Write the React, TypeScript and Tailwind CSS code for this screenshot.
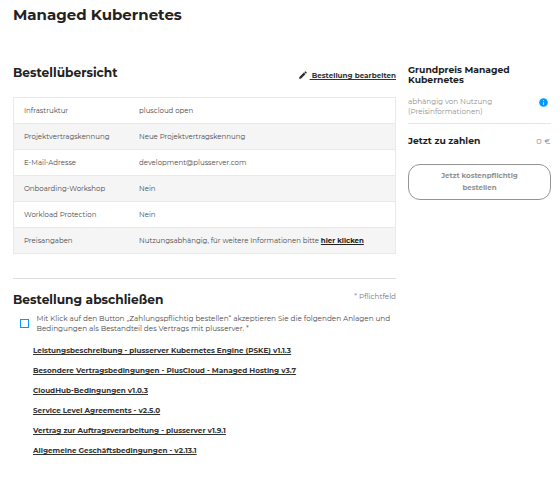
const rows = [
  { label: "Infrastruktur", value: "pluscloud open" },
  { label: "Projektvertragskennung", value: "Neue Projektvertragskennung" },
  { label: "E-Mail-Adresse", value: "development@plusserver.com" },
  { label: "Onboarding-Workshop", value: "Nein" },
  { label: "Workload Protection", value: "Nein" },
  { label: "Preisangaben", value: "Nutzungsabhängig, für weitere Informationen bitte", link: "hier klicken" },
];

const documents = [
  "Leistungsbeschreibung - plusserver Kubernetes Engine (PSKE) v1.1.3",
  "Besondere Vertragsbedingungen - PlusCloud - Managed Hosting v3.7",
  "CloudHub-Bedingungen v1.0.3",
  "Service Level Agreements - v2.5.0",
  "Vertrag zur Auftragsverarbeitung - plusserver v1.9.1",
  "Allgemeine Geschäftsbedingungen - v2.13.1",
];

const linkClass =
  "font-bold underline decoration-1 underline-offset-1 [text-decoration-skip-ink:none]";

function PencilIcon() {
  return (
    <svg viewBox="0 0 24 24" className="mr-[2px] mb-[2px] h-[10px] w-[10px] fill-[#2b2b2b]">
      <path d="M3 17.25V21h3.75L17.8 9.95l-3.75-3.75L3 17.25zM20.7 7.05a1 1 0 0 0 0-1.42l-2.33-2.33a1 1 0 0 0-1.42 0l-1.83 1.83 3.75 3.75 1.83-1.83z" />
    </svg>
  );
}

function InfoIcon() {
  return (
    <svg viewBox="0 0 24 24" className="mt-[0.5px] mr-[3px] h-[9px] w-[9px]">
      <circle cx="12" cy="12" r="11.5" fill="#0099ff" />
      <path d="M10.8 5.5h2.6v2.8h-2.6zM10.8 10.5h2.6v8h-2.6z" fill="#b8e0ff" />
    </svg>
  );
}

export default function App() {
  return (
    <main className="h-[478px] w-[560px] overflow-hidden bg-white pt-[5px] pl-[13px] font-['Montserrat','Inter',sans-serif] text-[7.24px] leading-[10px] text-[#4a4a4a]">
      <h1 className="h-[58px] text-[15px] leading-5 font-bold text-[#222]">Managed Kubernetes</h1>
      <div className="flex gap-3">
        <div className="w-[383px]">
          <div className="flex h-[34px] justify-between">
            <h2 className="text-[12.21px] leading-5 font-bold text-[#222]">Bestellübersicht</h2>
            <a className="mt-[8px] flex h-[10px] items-center self-start">
              <PencilIcon />
              <span className={`whitespace-pre text-[#333] ${linkClass}`}>{" Bestellung bearbeiten"}</span>
            </a>
          </div>

          <div className="border border-b-0 border-[#e9e9e9] text-[7px]">
            {rows.map((row) => (
              <div key={row.label} className="flex h-[26px] items-center border-b border-[#e9e9e9] pl-[10px] even:bg-[#f5f5f5]">
                <span className="w-[115px]">{row.label}</span>
                <span className="whitespace-nowrap">
                  {row.value}
                  {row.link && (
                    <>
                      {" "}
                      <a className={`text-[#222] ${linkClass}`}>{row.link}</a>
                    </>
                  )}
                </span>
              </div>
            ))}
          </div>

          <hr className="mt-6 border-[#dedede]" />

          <div className="mt-[11px] flex justify-between">
            <h2 className="text-[12.23px] leading-5 font-bold text-[#222]">Bestellung abschließen</h2>
            <span className="mt-[2px] text-[#777]">* Pflichtfeld</span>
          </div>

          <div className="mt-1 flex pl-[7px]">
            <span className="mt-[5px] h-[9px] w-[9px] shrink-0 border border-[#0099ff]" />
            <p className="ml-[7.5px] text-[7.255px] whitespace-nowrap">
              Mit Klick auf den Button „Zahlungspflichtig bestellen“ akzeptieren Sie die folgenden Anlagen und
              <br />
              Bedingungen als Bestandteil des Vertrags mit plusserver. *
            </p>
          </div>

          <ul className="mt-[12px] flex flex-col gap-[10px] pl-5">
            {documents.map((name) => (
              <li key={name} className="h-[10px] whitespace-nowrap">
                <a className={`text-[#333] ${linkClass}`}>{name}</a>
              </li>
            ))}
          </ul>
        </div>

        <aside className="w-[143px] pt-[2px]">
          <h3 className="text-[9.21px] leading-[10px] font-bold text-[#1d1d1b]">
            Grundpreis Managed
            <br />
            Kubernetes
          </h3>
          <div className="mt-3 flex justify-between border-b border-[#e6e6e6] pb-[6px] text-[#919191]">
            <p>
              abhängig von Nutzung
              <br />
              (Preisinformationen)
            </p>
            <InfoIcon />
          </div>
          <div className="mt-[12px] flex items-center justify-between">
            <span className="text-[9.21px] font-bold text-[#1d1d1b]">Jetzt zu zahlen</span>
            <span className="text-[8.15px] tracking-[0.3px] text-[#888]">0 €</span>
          </div>
          <button className="mt-[18px] flex h-9 w-full flex-col items-center justify-center rounded-[12px] border border-[#949494] text-[7.07px] leading-[12px] font-bold text-[#919191]">
            <span>Jetzt kostenpflichtig</span>
            <span>bestellen</span>
          </button>
        </aside>
      </div>
    </main>
  );
}
